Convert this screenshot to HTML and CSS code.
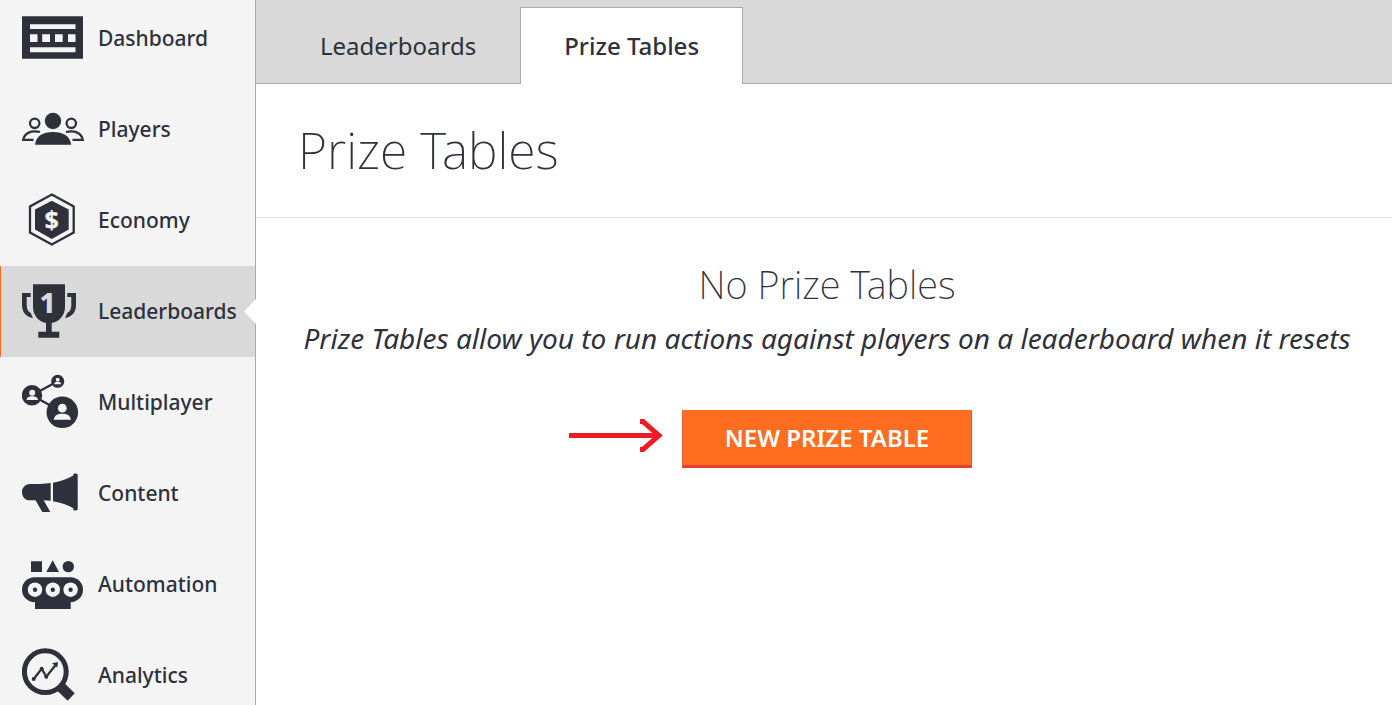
FILE: index.html
```html
<!DOCTYPE html>
<html lang="en">
<head>
<meta charset="utf-8">
<title>Prize Tables</title>
<link rel="stylesheet" href="styles.css">
</head>
<body>
<div class="app">
  <nav class="sidebar" aria-label="Main">
    <ul class="menu">
      <li><a class="menu-item" href="#dashboard">
        <svg class="icon" viewBox="0 0 64 61" aria-hidden="true"><path fill-rule="evenodd" d="M0 8.3H61V50.7H0ZM8 16.3V21H53.5V16.3ZM8 26.3V34H15.5V26.3ZM20.2 26.3V34H28V26.3ZM33 26.3V34H40.7V26.3ZM46 26.3V34H53.5V26.3ZM8 39.3V44.3H53.5V39.3Z"/></svg>
        <span>Dashboard</span></a></li>
      <li><a class="menu-item" href="#players">
        <svg class="icon" viewBox="0 0 64 61" aria-hidden="true"><circle cx="31" cy="22" r="8.2"/><path d="M13 45.7C14 37 21 33 31 33S48 37 49.2 45.7Z"/><g class="line"><circle cx="12.7" cy="24.3" r="4.7"/><circle cx="49.3" cy="24.3" r="4.7"/><path d="M18 33C9 31 2.500 34 1.200 40.900H11.500M44 33C53 31 59.500 34 60.800 40.900H50.500"/></g></svg>
        <span>Players</span></a></li>
      <li><a class="menu-item" href="#economy">
        <svg class="icon" viewBox="0 0 64 61" aria-hidden="true"><path class="line" d="M29.800 4.500L51.700 16.500V42.500L29.800 54.500L8 42.500V16.500Z"/><path d="M29.800 10.700L46.700 19.500V39.500L29.800 49L13 39.500V19.500Z"/><text class="mark" x="29.800" y="39" font-size="25">$</text></svg>
        <span>Economy</span></a></li>
      <li><a class="menu-item active" href="#leaderboards" aria-current="page">
        <svg class="icon" viewBox="0 0 64 61" aria-hidden="true"><path d="M11 3.200H43V26C43 35 37 40.500 29.700 42V50.800H37.300V56.700H16.300V50.800H24V42C17 40.500 11 35 11 26Z"/><path d="M8.700 12H0V24C0 31 4 36 11 37L8.700 32C6 30.500 4.700 28 4.700 24V16H8.700ZM45.300 12H54V24C54 31 50 36 43 37L45.300 32C48 30.500 49.300 28 49.300 24V16H45.300Z"/><text class="mark one" x="25.500" y="32" font-size="28">1</text></svg>
        <span>Leaderboards</span></a></li>
      <li><a class="menu-item" href="#multiplayer">
        <svg class="icon" viewBox="0 0 64 61" aria-hidden="true"><path class="line" d="M35.700 9.300L10 23.300L40.300 40.300"/><circle cx="10" cy="23.300" r="10.200"/><circle cx="35.700" cy="9.300" r="6.500"/><circle cx="40.300" cy="40.300" r="15.800"/><g class="light"><circle cx="10.200" cy="20.700" r="3"/><path d="M4.500 28C5 25 7 24.300 10.200 24.300S15.500 25 16 28Z"/><circle cx="35.700" cy="7.600" r="1.900"/><path d="M32.200 12.300C32.500 10.300 33.700 9.800 35.700 9.800S38.900 10.300 39.200 12.300Z"/><circle cx="40.300" cy="36.200" r="4.400"/><path d="M31.700 47.700C32.500 43.200 35.500 41.700 40.300 41.700S48.100 43.200 49 47.700Z"/></g></svg>
        <span>Multiplayer</span></a></li>
      <li><a class="menu-item" href="#content">
        <svg class="icon" viewBox="0 0 64 61" aria-hidden="true"><path d="M28.700 20V37.700L21.700 37.200L28.300 49H20.300L13.500 37.300H8C3 37.300 0 33.500 0 29.200S3 21 8 21C15 21 22 21 28.700 20ZM31 19.700C39 18.500 46 15.500 51.300 12.500V11.500C51.500 10 55.700 10 55.700 12V46C55.700 48 51.500 48 51.300 46.500V45.300C46 42 39 39.500 31 38.300Z"/></svg>
        <span>Content</span></a></li>
      <li><a class="menu-item" href="#automation">
        <svg class="icon" viewBox="0 0 64 61" aria-hidden="true"><path d="M9 7.200H20V18H9ZM30.700 6.300L37 18H24.300Z"/><circle cx="46.300" cy="12.600" r="5.700"/><rect y="23.200" width="61" height="25" rx="12.500"/><path d="M13 46H48.700V55H13Z"/><g class="light"><circle cx="13" cy="35.700" r="7.200"/><circle cx="30.800" cy="35.700" r="7.200"/><circle cx="48.600" cy="35.700" r="7.200"/></g><circle cx="13" cy="35.700" r="2.200"/><circle cx="30.800" cy="35.700" r="2.200"/><circle cx="48.600" cy="35.700" r="2.200"/></svg>
        <span>Automation</span></a></li>
      <li><a class="menu-item" href="#analytics">
        <svg class="icon" viewBox="0 0 64 61" aria-hidden="true"><circle class="ring" cx="23.300" cy="26.700" r="20.900"/><path d="M42 37.800L52.700 48.300L45.700 55.700L35 45.500Z"/><path class="line" d="M11.700 34L19.700 23.700L24.300 31.700L34 19.500"/><circle cx="11.700" cy="34" r="2"/><circle cx="19.700" cy="23.700" r="2"/><circle cx="24.300" cy="31.700" r="2"/><path d="M36 17L35.300 22.500L30 18.300Z"/></svg>
        <span>Analytics</span></a></li>
    </ul>
  </nav>
  <main class="main">
    <nav class="tabs" aria-label="Leaderboards">
      <a class="tab" href="#leaderboard-list">Leaderboards</a>
      <a class="tab selected" href="#prize-tables" aria-current="page">Prize Tables</a>
    </nav>
    <header class="page-header"><h1>Prize Tables</h1></header>
    <section class="empty">
      <h2>No Prize Tables</h2>
      <p>Prize Tables allow you to run actions against players on a leaderboard when it resets</p>
      <div class="action">
        <svg class="pointer" viewBox="0 0 94 34" aria-hidden="true"><path d="M0 16.500H91M71 2.500H74L90 16.500L74 30.500H71"/></svg>
        <button class="primary" type="button">NEW PRIZE TABLE</button>
      </div>
    </section>
  </main>
</div>
</body>
</html>
```
FILE: styles.css
```css
* { box-sizing: border-box; }
body {
  margin: 0;
  font-family: "Noto Sans", "Open Sans", sans-serif;
  color: #2e313b;
  background: #fff;
}
.app { display: flex; height: 100vh; overflow: hidden; }
.sidebar {
  flex: 0 0 256px;
  background: #f4f4f4;
  border-right: 1px solid #aaa;
}
.menu { list-style: none; margin: -7px 0 0; padding: 0; }
.menu-item {
  position: relative;
  display: flex;
  align-items: center;
  gap: 12px;
  height: 91px;
  padding-left: 22px;
  font-size: 21px;
  font-weight: 500;
  color: inherit;
  text-decoration: none;
}
.menu-item span { padding-bottom: 1px; }
.menu-item.active { background: #d9d9d9; box-shadow: inset 1px 0 #ff6d20; }
.menu-item.active::after {
  content: "";
  position: absolute;
  right: -1px;
  top: 33px;
  width: 12px;
  height: 25px;
  background: #fff;
  clip-path: polygon(0 50%, 100% 0, 100% 100%);
}
.icon { flex: none; width: 64px; height: 61px; fill: #2e313b; }
.icon .line { fill: none; stroke: #2e313b; stroke-width: 2.3; }
.icon .ring { fill: none; stroke: #2e313b; stroke-width: 5; }
.icon .light, .icon .mark { fill: #f4f4f4; }
.icon .mark { font-weight: 800; text-anchor: middle; }
.icon .one { fill: #d9d9d9; }
.main { flex: 1; min-width: 0; }
.tabs {
  display: flex;
  align-items: flex-end;
  height: 84px;
  padding: 0 20px;
  background: #d9d9d9;
  border-bottom: 1px solid #aaa;
}
.tab {
  padding: 21px 43px 0;
  height: 77px;
  margin-bottom: -1px;
  border: 1px solid transparent;
  border-bottom: 0;
  font-size: 24px;
  line-height: 34px;
  color: inherit;
  text-decoration: none;
}
.tab.selected { background: #fff; border-color: #aaa; font-weight: 500; }
.page-header { padding: 32px 42px 33px; border-bottom: 1px solid #d9d9d9; }
h1, h2, p { margin: 0; }
h1 { font-size: 50px; line-height: 68px; font-weight: 200; }
.empty { padding: 39px 32px 39px 38px; text-align: center; }
h2 { font-size: 38px; line-height: 54px; font-weight: 200; }
p { font-size: 28px; line-height: 54px; font-style: italic; }
.action { position: relative; display: inline-block; margin-top: 45px; }
.primary {
  display: block;
  height: 58px;
  padding: 0 42px;
  border: 1px solid #d9602a;
  border-width: 0 1px 3px;
  border-bottom-color: #e0432f;
  background: #ff6d20;
  color: #fff;
  font: 600 24px "Noto Sans", sans-serif;
}
.pointer {
  position: absolute;
  right: calc(100% + 19px);
  top: 9px;
  width: 94px;
  height: 34px;
  fill: none;
  stroke: #ed1c24;
  stroke-width: 5;
}
```
